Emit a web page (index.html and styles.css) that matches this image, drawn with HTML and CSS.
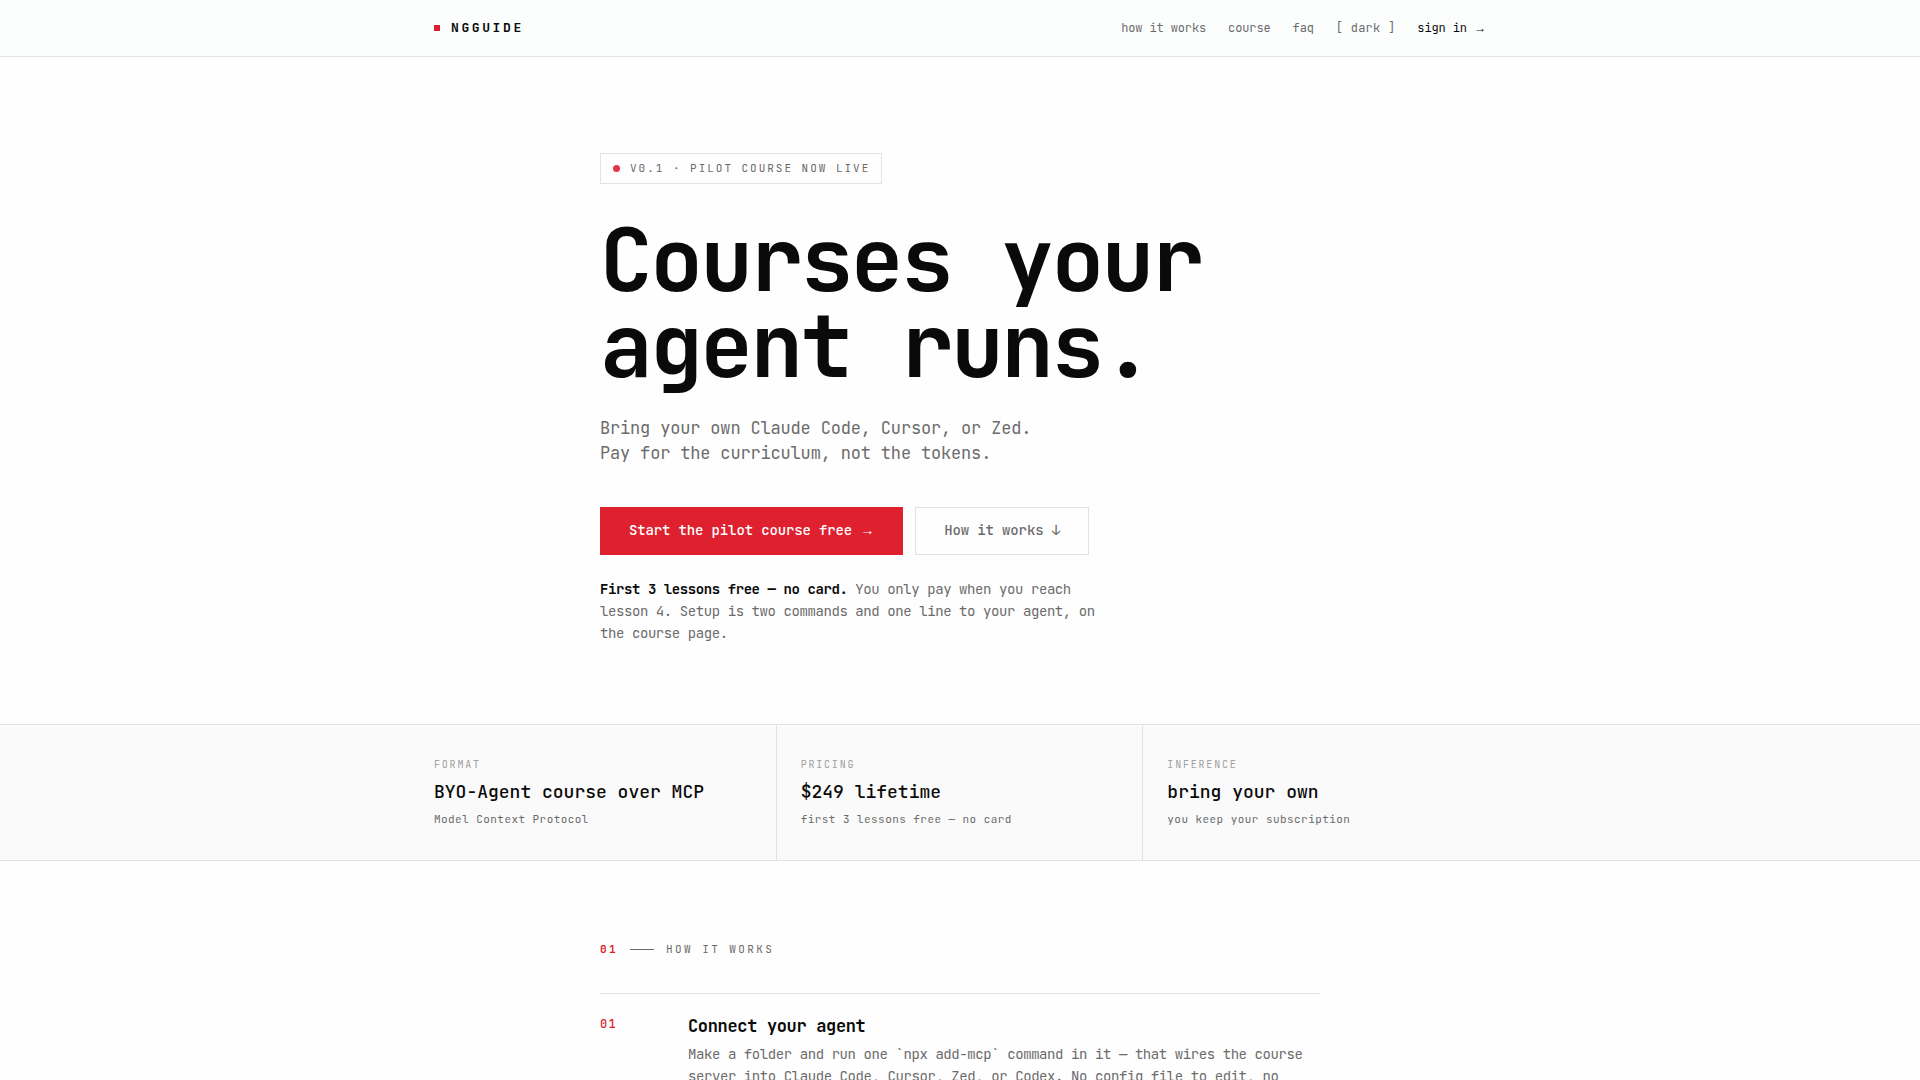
FILE: index.html
```html
<!DOCTYPE html>
<html lang="en">
<head>
    <meta charset="UTF-8">
    <meta name="viewport" content="width=device-width, initial-scale=1.0">
    <title>NGGUIDE</title>
    <link rel="stylesheet" href="styles.css">
</head>
<body>
    <header class="site-header">
        <div class="header-inner">
            <a class="brand" href="#"><span class="brand-mark"></span>NGGUIDE</a>
            <nav class="nav">
                <a href="#how">how it works</a>
                <a href="#course">course</a>
                <a href="#faq">faq</a>
                <button type="button" class="theme-toggle">[ dark ]</button>
                <a class="sign-in" href="#signin">sign in <span class="arrow">→</span></a>
            </nav>
        </div>
    </header>

    <main>
        <section class="hero">
            <div class="badge"><span class="badge-dot"></span>V0.1 · PILOT COURSE NOW LIVE</div>
            <h1>Courses your<br>agent runs.</h1>
            <p class="lead">Bring your own Claude Code, Cursor, or Zed.<br>Pay for the curriculum, not the tokens.</p>
            <div class="actions">
                <a class="btn btn-primary" href="#course">Start the pilot course free <span class="arrow">→</span></a>
                <a class="btn btn-outline" href="#how">How it works ↓</a>
            </div>
            <p class="note"><strong>First 3 lessons free — no card.</strong> You only pay when you reach lesson 4. Setup is two commands and one line to your agent, on the course page.</p>
        </section>

        <section class="facts">
            <dl class="facts-grid">
                <div class="fact">
                    <dt>FORMAT</dt>
                    <dd class="fact-value">BYO-Agent course over MCP</dd>
                    <dd class="fact-sub">Model Context Protocol</dd>
                </div>
                <div class="fact">
                    <dt>PRICING</dt>
                    <dd class="fact-value">$249 lifetime</dd>
                    <dd class="fact-sub">first 3 lessons free — no card</dd>
                </div>
                <div class="fact">
                    <dt>INFERENCE</dt>
                    <dd class="fact-value">bring your own</dd>
                    <dd class="fact-sub">you keep your subscription</dd>
                </div>
            </dl>
        </section>

        <section class="how" id="how">
            <h2 class="section-label"><span class="section-number">01</span><span class="section-rule"></span>HOW IT WORKS</h2>
            <div class="step">
                <span class="step-number">01</span>
                <div>
                    <h3>Connect your agent</h3>
                    <p>Make a folder and run one `npx add-mcp` command in it — that wires the course server into Claude Code, Cursor, Zed, or Codex. No config file to edit, no</p>
                </div>
            </div>
        </section>
    </main>
</body>
</html>
```

FILE: styles.css
```css
* {
    box-sizing: border-box;
    margin: 0;
    padding: 0;
}
html, body {
    height: 100%;
}
body {
    font-family: "JetBrains Mono", "DejaVu Sans Mono", monospace;
    font-size: 14px;
    line-height: 22px;
    color: #0a0a0a;
    background: #fefefe;
    overflow: hidden;
}
a {
    color: inherit;
    text-decoration: none;
}
.arrow {
    display: inline-block;
    width: 1em;
    font-family: "Liberation Mono", monospace;
    font-weight: 400;
    line-height: 1;
    text-align: center;
}

/* header */
.site-header {
    background: #fcfefe;
    border-bottom: 1px solid #e0e5e5;
}
.header-inner {
    display: flex;
    align-items: center;
    justify-content: space-between;
    max-width: 1100px;
    height: 56px;
    margin: 0 auto;
    padding: 0 24px;
}
.brand {
    display: flex;
    align-items: center;
    gap: 11px;
    font-size: 13px;
    font-weight: 700;
    letter-spacing: 0.2em;
}
.brand-mark {
    width: 6px;
    height: 6px;
    background: #dc1f2e;
}
.nav {
    display: flex;
    align-items: center;
    gap: 22px;
    font-size: 12px;
    letter-spacing: -0.01em;
    color: #6b6b6b;
}
.theme-toggle {
    font: inherit;
    letter-spacing: 0.02em;
    color: inherit;
    background: none;
    border: none;
    cursor: pointer;
}
.sign-in {
    color: #0a0a0a;
}

/* hero */
.hero {
    max-width: 768px;
    margin: 0 auto;
    padding: 96px 24px 80px;
}
.badge {
    display: inline-flex;
    align-items: center;
    gap: 10px;
    padding: 6px 11px 6px 12px;
    border: 1px solid #e2e2e2;
    font-size: 11px;
    line-height: 17px;
    letter-spacing: 0.18em;
    color: #6b6b6b;
}
.badge-dot {
    width: 7px;
    height: 7px;
    border-radius: 50%;
    background: #e5344a;
}
h1 {
    margin-top: 32px;
    font-size: 88px;
    line-height: 86px;
    font-weight: 700;
    letter-spacing: -0.03em;
}
.lead {
    margin-top: 28px;
    font-size: 17px;
    line-height: 25px;
    letter-spacing: -0.01em;
    color: #6b6b6b;
}
.actions {
    display: flex;
    gap: 12px;
    margin-top: 41px;
}
.btn {
    padding: 11px 28px 13px;
    border: 1px solid #e2e2e2;
    font-weight: 500;
    letter-spacing: -0.01em;
    color: #6b6b6b;
}
.btn-primary {
    background: #df202f;
    border-color: #df202f;
    color: #fff;
}
.note {
    max-width: 520px;
    margin-top: 23px;
    letter-spacing: -0.03em;
    color: #6b6b6b;
}
.note strong {
    font-weight: 600;
    color: #0a0a0a;
}

/* facts */
.facts {
    background: #fafafa;
    border-top: 1px solid #e2e2e2;
    border-bottom: 1px solid #e2e2e2;
}
.facts-grid {
    display: grid;
    grid-template-columns: repeat(3, 1fr);
    max-width: 1100px;
    margin: 0 auto;
}
.fact {
    padding: 32px 24px;
    border-right: 1px solid #e2e2e2;
}
.fact:last-child {
    border-right: none;
}
.fact dt {
    font-size: 10px;
    line-height: 16px;
    letter-spacing: 0.18em;
    color: #a0a0a0;
}
.fact-value {
    margin-top: 6px;
    font-size: 18px;
    line-height: 26px;
    font-weight: 500;
}
.fact-sub {
    margin-top: 5px;
    font-size: 11px;
    line-height: 18px;
    letter-spacing: 0.04em;
    color: #6b6b6b;
}

/* how it works */
.how {
    max-width: 768px;
    margin: 0 auto;
    padding: 79px 24px 0;
}
.section-label {
    display: flex;
    align-items: center;
    gap: 12px;
    font-size: 11px;
    line-height: 18px;
    font-weight: 400;
    letter-spacing: 0.22em;
    color: #6b6b6b;
}
.section-number {
    font-weight: 600;
    color: #dc1f2e;
}
.section-rule {
    width: 24px;
    height: 1px;
    background: #6b6b6b;
}
.step {
    display: grid;
    grid-template-columns: 64px 1fr;
    gap: 24px;
    margin-top: 35px;
    padding-top: 20px;
    border-top: 1px solid #e2e2e2;
}
.step-number {
    font-size: 12px;
    line-height: 20px;
    font-weight: 500;
    letter-spacing: 0.1em;
    color: #dc1f2e;
}
.step h3 {
    font-size: 17px;
    line-height: 24px;
    font-weight: 600;
    letter-spacing: -0.02em;
}
.step p {
    margin-top: 5px;
    letter-spacing: -0.03em;
    color: #6b6b6b;
}
```
